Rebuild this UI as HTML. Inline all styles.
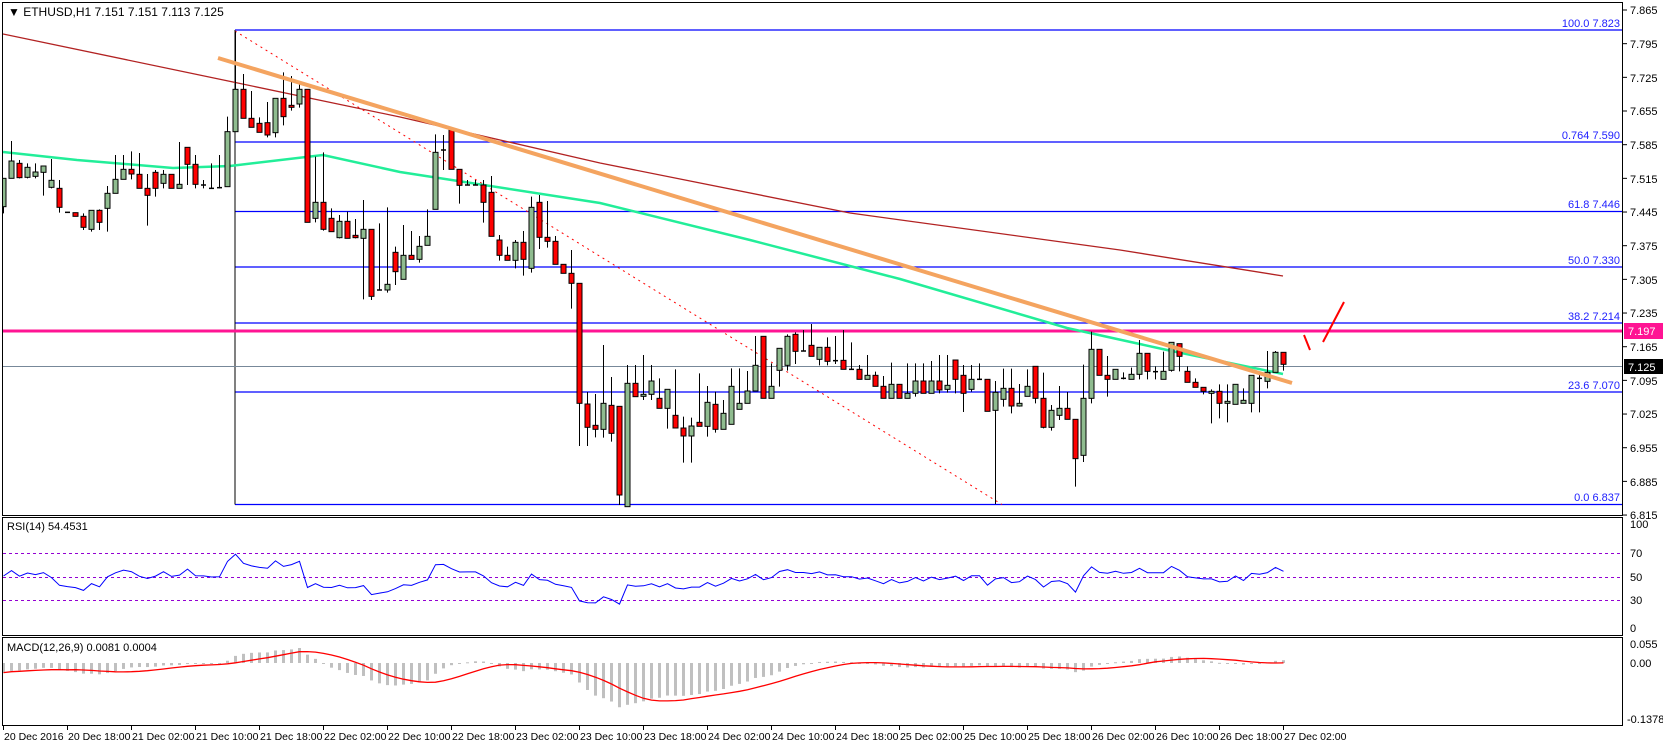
<!DOCTYPE html>
<html><head><meta charset="utf-8">
<style>
html,body{margin:0;padding:0;background:#fff;width:1663px;height:746px;overflow:hidden}
svg{display:block;font-family:"Liberation Sans",sans-serif}
</style></head>
<body>
<svg id="s" width="1663" height="746" viewBox="0 0 1663 746" xmlns="http://www.w3.org/2000/svg">
<defs>
<clipPath id="cm"><rect x="3" y="3" width="1620" height="512"/></clipPath>
<clipPath id="cr"><rect x="3" y="518" width="1620" height="117"/></clipPath>
<clipPath id="cd"><rect x="3" y="638" width="1620" height="87"/></clipPath>
</defs>
<g id="main" clip-path="url(#cm)">
<g stroke="#0000ff" stroke-width="1.3">
<line x1="235" y1="30" x2="1623" y2="30"/>
<line x1="235" y1="142" x2="1623" y2="142"/>
<line x1="235" y1="211.5" x2="1623" y2="211.5"/>
<line x1="235" y1="267" x2="1623" y2="267"/>
<line x1="235" y1="323" x2="1623" y2="323"/>
<line x1="235" y1="392" x2="1623" y2="392"/>
<line x1="235" y1="504.5" x2="1623" y2="504.5"/>
</g>
<line x1="235" y1="30" x2="235" y2="504.5" stroke="#000" stroke-width="1"/>
<line x1="235" y1="31" x2="1002" y2="504.5" stroke="#ff0000" stroke-width="1" stroke-dasharray="2,4"/>
<line x1="2" y1="366.5" x2="1623" y2="366.5" stroke="#778899" stroke-width="1"/>
<line x1="2" y1="331" x2="1623" y2="331" stroke="#ff1493" stroke-width="3"/>
<g font-size="11" fill="#2020ff" text-anchor="end">
<text x="1620" y="27">100.0  7.823</text>
<text x="1620" y="139">0.764  7.590</text>
<text x="1620" y="208">61.8  7.446</text>
<text x="1620" y="264">50.0  7.330</text>
<text x="1620" y="320">38.2  7.214</text>
<text x="1620" y="389">23.6  7.070</text>
<text x="1620" y="501">0.0  6.837</text>
</g>
<polyline fill="none" stroke="#b22222" stroke-width="1.3" points="3,34 233,82 400,117 600,163 850,213 1120,250 1283,276"/>
<polyline fill="none" stroke="#22ee99" stroke-width="2.5" points="3,152 77,160 173,168 230,166 323,155 400,172 600,203 750,240 900,279 1067,328 1167,350 1283,374"/>
<g id="candles"></g>
<line x1="218" y1="58" x2="1292" y2="383" stroke="#f4a460" stroke-width="4"/>
<g stroke="#ff0000" stroke-width="2"><line x1="1304" y1="335" x2="1310" y2="350"/><line x1="1323" y1="342" x2="1344" y2="302"/></g>
</g>
<text x="8" y="16" font-size="12" fill="#000">&#9660; ETHUSD,H1  7.151 7.151 7.113 7.125</text>
<g fill="none" stroke="#000" stroke-width="1">
<rect x="2.5" y="2.5" width="1620" height="513"/>
<rect x="2.5" y="517.5" width="1620" height="118"/>
<rect x="2.5" y="637.5" width="1620" height="88"/>
</g>
<g id="axis" font-size="11" fill="#000"></g>
<rect x="1624" y="323" width="39" height="16" fill="#ff1493"/>
<text x="1628" y="335" font-size="11" fill="#fff">7.197</text>
<rect x="1624" y="359" width="39" height="15" fill="#000"/>
<text x="1628" y="371" font-size="11" fill="#fff">7.125</text>
<g stroke="#9400d3" stroke-width="1" stroke-dasharray="3,3">
<line x1="3" y1="553.5" x2="1623" y2="553.5"/>
<line x1="3" y1="577.5" x2="1623" y2="577.5"/>
<line x1="3" y1="600.5" x2="1623" y2="600.5"/>
</g>
<g id="rsi" clip-path="url(#cr)"></g>
<text x="7" y="530" font-size="11" fill="#000">RSI(14) 54.4531</text>
<g font-size="11" fill="#000">
<text x="1630" y="528">100</text><text x="1630" y="557">70</text><text x="1630" y="581">50</text><text x="1630" y="604">30</text><text x="1630" y="632">0</text>
<text x="1630" y="648">0.055</text><text x="1630" y="667">0.00</text><text x="1627" y="723">-0.1378</text>
</g>
<g id="macd" clip-path="url(#cd)"></g>
<text x="7" y="651" font-size="11" fill="#000">MACD(12,26,9) 0.0081 0.0004</text>
<g font-size="10.5" fill="#000" textLength="58">
<text x="4" y="740">20 Dec 2016</text>
<text x="68" y="740">20 Dec 18:00</text>
<text x="132" y="740">21 Dec 02:00</text>
<text x="196" y="740">21 Dec 10:00</text>
<text x="260" y="740">21 Dec 18:00</text>
<text x="324" y="740">22 Dec 02:00</text>
<text x="388" y="740">22 Dec 10:00</text>
<text x="452" y="740">22 Dec 18:00</text>
<text x="516" y="740">23 Dec 02:00</text>
<text x="580" y="740">23 Dec 10:00</text>
<text x="644" y="740">23 Dec 18:00</text>
<text x="708" y="740">24 Dec 02:00</text>
<text x="772" y="740">24 Dec 10:00</text>
<text x="836" y="740">24 Dec 18:00</text>
<text x="900" y="740">25 Dec 02:00</text>
<text x="964" y="740">25 Dec 10:00</text>
<text x="1028" y="740">25 Dec 18:00</text>
<text x="1092" y="740">26 Dec 02:00</text>
<text x="1156" y="740">26 Dec 10:00</text>
<text x="1220" y="740">26 Dec 18:00</text>
<text x="1284" y="740">27 Dec 02:00</text>
</g>
<g font-size="11" fill="#000">
<text x="1630" y="14">7.865</text><text x="1630" y="48">7.795</text><text x="1630" y="82">7.725</text><text x="1630" y="115">7.655</text>
<text x="1630" y="149">7.585</text><text x="1630" y="183">7.515</text><text x="1630" y="216">7.445</text><text x="1630" y="250">7.375</text>
<text x="1630" y="284">7.305</text><text x="1630" y="317">7.235</text><text x="1630" y="351">7.165</text><text x="1630" y="385">7.095</text>
<text x="1630" y="418">7.025</text><text x="1630" y="452">6.955</text><text x="1630" y="486">6.885</text><text x="1630" y="519">6.815</text>
</g>
</svg>
<script>
(function(){
var NS="http://www.w3.org/2000/svg";
function el(p,t,a){var e=document.createElementNS(NS,t);for(var k in a)e.setAttribute(k,a[k]);p.appendChild(e);return e;}
var z9=[[320,235,235,340],[235,183,123,235],[190,233,180,235],[232,202,190,235],[229,216,190,235],[217,198,198,287],[262,241,177,265],[265,322,240,338],[337,337,337,337],[338,349,338,349],[349,382,340,390],[388,331,331,395],[331,367,328,390],[325,280,258,395],[280,238,165,280],[238,208,165,238],[208,222,154,238],[223,265,159,265],[265,286,222,377],[217,265,210,290],[250,223,210,265],[223,265,223,265],[265,253,126,265],[142,193,142,255],[193,253,165,265]];
var z6=[[495,495,480,505],[505,505,430,505],[503,503,405,505],[500,335,290,500],[335,208,34,335],[208,295,162,295],[295,322,213,322],[310,337,292,337],[308,345,246,352],[338,235,235,352],[235,290,157,316],[256,262,168,272],[252,208,193,263],[208,607,208,607],[595,547,410,607],[547,628,397,632],[595,635,565,635],[653,604,585,655],[604,655,575,655],[646,653,597,655],[655,628,540,838],[628,829,628,840],[810,810,610,810],[810,793,562,818],[697,755,680,795],[778,706,615,778],[706,718,633,718],[718,679,648,728],[676,649,568,676],[568,397,343,568],[390,390,345,450],[330,448,330,448],[448,496,448,551],[495,495,480,495],[495,495,480,495],[495,547,480,608],[517,649,468,649],[660,706,645,722],[706,721,680,721],[721,667,660,745],[667,718,633,767],[745,562,530,758],[547,652,525,687],[652,664,543,683],[664,733,648,733],[733,760,733,760],[760,790,690,866],[790,1150,790,1278],[1152,1222,1116,1278],[1216,1228,1122,1252]];
var z8=[[418,340,165,443],[346,430,261,455],[349,615,349,645],[650,280,225,630],[280,320,225,320],[319,313,195,330],[313,273,225,330],[325,355,265,355],[355,298,298,416],[376,414,238,414],[414,438,380,518],[438,408,383,518],[397,409,250,409],[409,337,288,440],[343,418,305,428],[418,370,330,418],[403,289,235,403],[358,340,235,358],[340,303,243,340],[303,226,138,303],[139,325,139,325],[325,289,220,325],[241,175,175,290],[226,139,133,242],[133,184,127,222],[183,183,120,183],[166,199,102,199],[208,172,172,226],[172,214,142,226],[212,212,138,222],[211,238,120,238],[238,238,157,238],[238,268,225,268],[268,256,195,268],[256,289,245,289],[289,325,258,325],[325,283,218,325]];
var z7=[[403,445,403,445],[445,430,340,445],[430,393,340,440],[393,430,340,430],[430,393,333,430],[393,420,315,430],[418,406,315,428],[330,388,330,430],[376,430,345,486],[418,388,345,425],[388,388,340,388],[388,484,388,484],[481,427,393,762],[448,415,356,470],[415,468,356,490],[468,460,402,470],[439,409,358,439],[349,445,349,460],[445,532,368,535],[532,481,465,542],[496,475,408,510],[475,508,426,508],[508,626,508,710],[616,445,344,636],[445,298,245,460],[298,376,298,376],[376,388,318,440],[388,358,358,388],[385,385,367,388],[388,373,353,388],[373,310,270,388],[310,364,310,388],[365,365,349,388],[388,364,305,388],[361,277,277,365],[281,319,281,364],[364,397,349,397],[397,412,385,412],[412,424,412,433],[430,424,418,520],[424,460,403,505],[460,454,403,517],[463,403,403,463],[460,451,415,460],[460,376,376,487],[385,385,367,487],[394,367,303,415],[367,307,303,367],[307,343,307,362]];
var bars=[];
function add(arr,y0){arr.forEach(function(b){bars.push(b.map(function(v){return y0+v/3;}));});}
add(z9,100);add(z6,20);add(z8,290);add(z7,250);
var g=document.getElementById("candles");
bars.forEach(function(b,i){
 var x=3+8*i,o=b[0],c=b[1],h=Math.min(b[2],o,c),l=Math.max(b[3],o,c);
 el(g,"line",{x1:x+.5,y1:h,x2:x+.5,y2:l,stroke:"#000","stroke-width":1});
 var t=Math.min(o,c),bt=Math.max(o,c);
 if(bt-t<1.5){el(g,"line",{x1:x-2,y1:t,x2:x+3,y2:t,stroke:"#000","stroke-width":1.5});}
 else el(g,"rect",{x:x-2,y:t,width:5,height:bt-t,fill:c<o?"#8fbc8f":"#ff0000",stroke:"#000","stroke-width":1});
});
var cl=bars.map(function(b){return 7.865-(b[1]-10)/481;});
var ag=0.012,al=0.012,pts=[];
for(var i=0;i<cl.length;i++){
 if(i>0){var d=cl[i]-cl[i-1];ag=(ag*13+Math.max(d,0))/14;al=(al*13+Math.max(-d,0))/14;}
 var r=100-100/(1+ag/al);
 pts.push((3+8*i+.5)+","+(628-r*1.04).toFixed(1));
}
el(document.getElementById("rsi"),"polyline",{points:pts.join(" "),fill:"none",stroke:"#0000ff","stroke-width":1});
var e12=cl[0],e26=cl[0]+0.03,m=[],sp=[],mg=document.getElementById("macd");
for(i=0;i<cl.length;i++){e12+=(cl[i]-e12)*2/13;e26+=(cl[i]-e26)*2/27;m.push(e12-e26);}
for(i=0;i<cl.length;i++){var s=0,n=0;for(var j=Math.max(0,i-8);j<=i;j++){s+=m[j];n++;}var sg=s/n;
 var x=3+8*i,y=663-m[i]*345;
 el(mg,"rect",{x:x-1,y:Math.min(663,y),width:3,height:Math.max(1,Math.abs(y-663)),fill:"#c0c0c0"});
 sp.push((x+.5)+","+(663-sg*345).toFixed(1));}
el(mg,"polyline",{points:sp.join(" "),fill:"none",stroke:"#ff0000","stroke-width":1.3});
var ax=document.getElementById("axis");
for(i=0;i<16;i++){var y=10+i*33.67;el(ax,"line",{x1:1623,y1:y,x2:1627,y2:y,stroke:"#000"});}
for(i=0;i<=20;i++){var xx=3+64*i+.5;el(ax,"line",{x1:xx,y1:726,x2:xx,y2:730,stroke:"#000"});}
})();
</script>
</body></html>
